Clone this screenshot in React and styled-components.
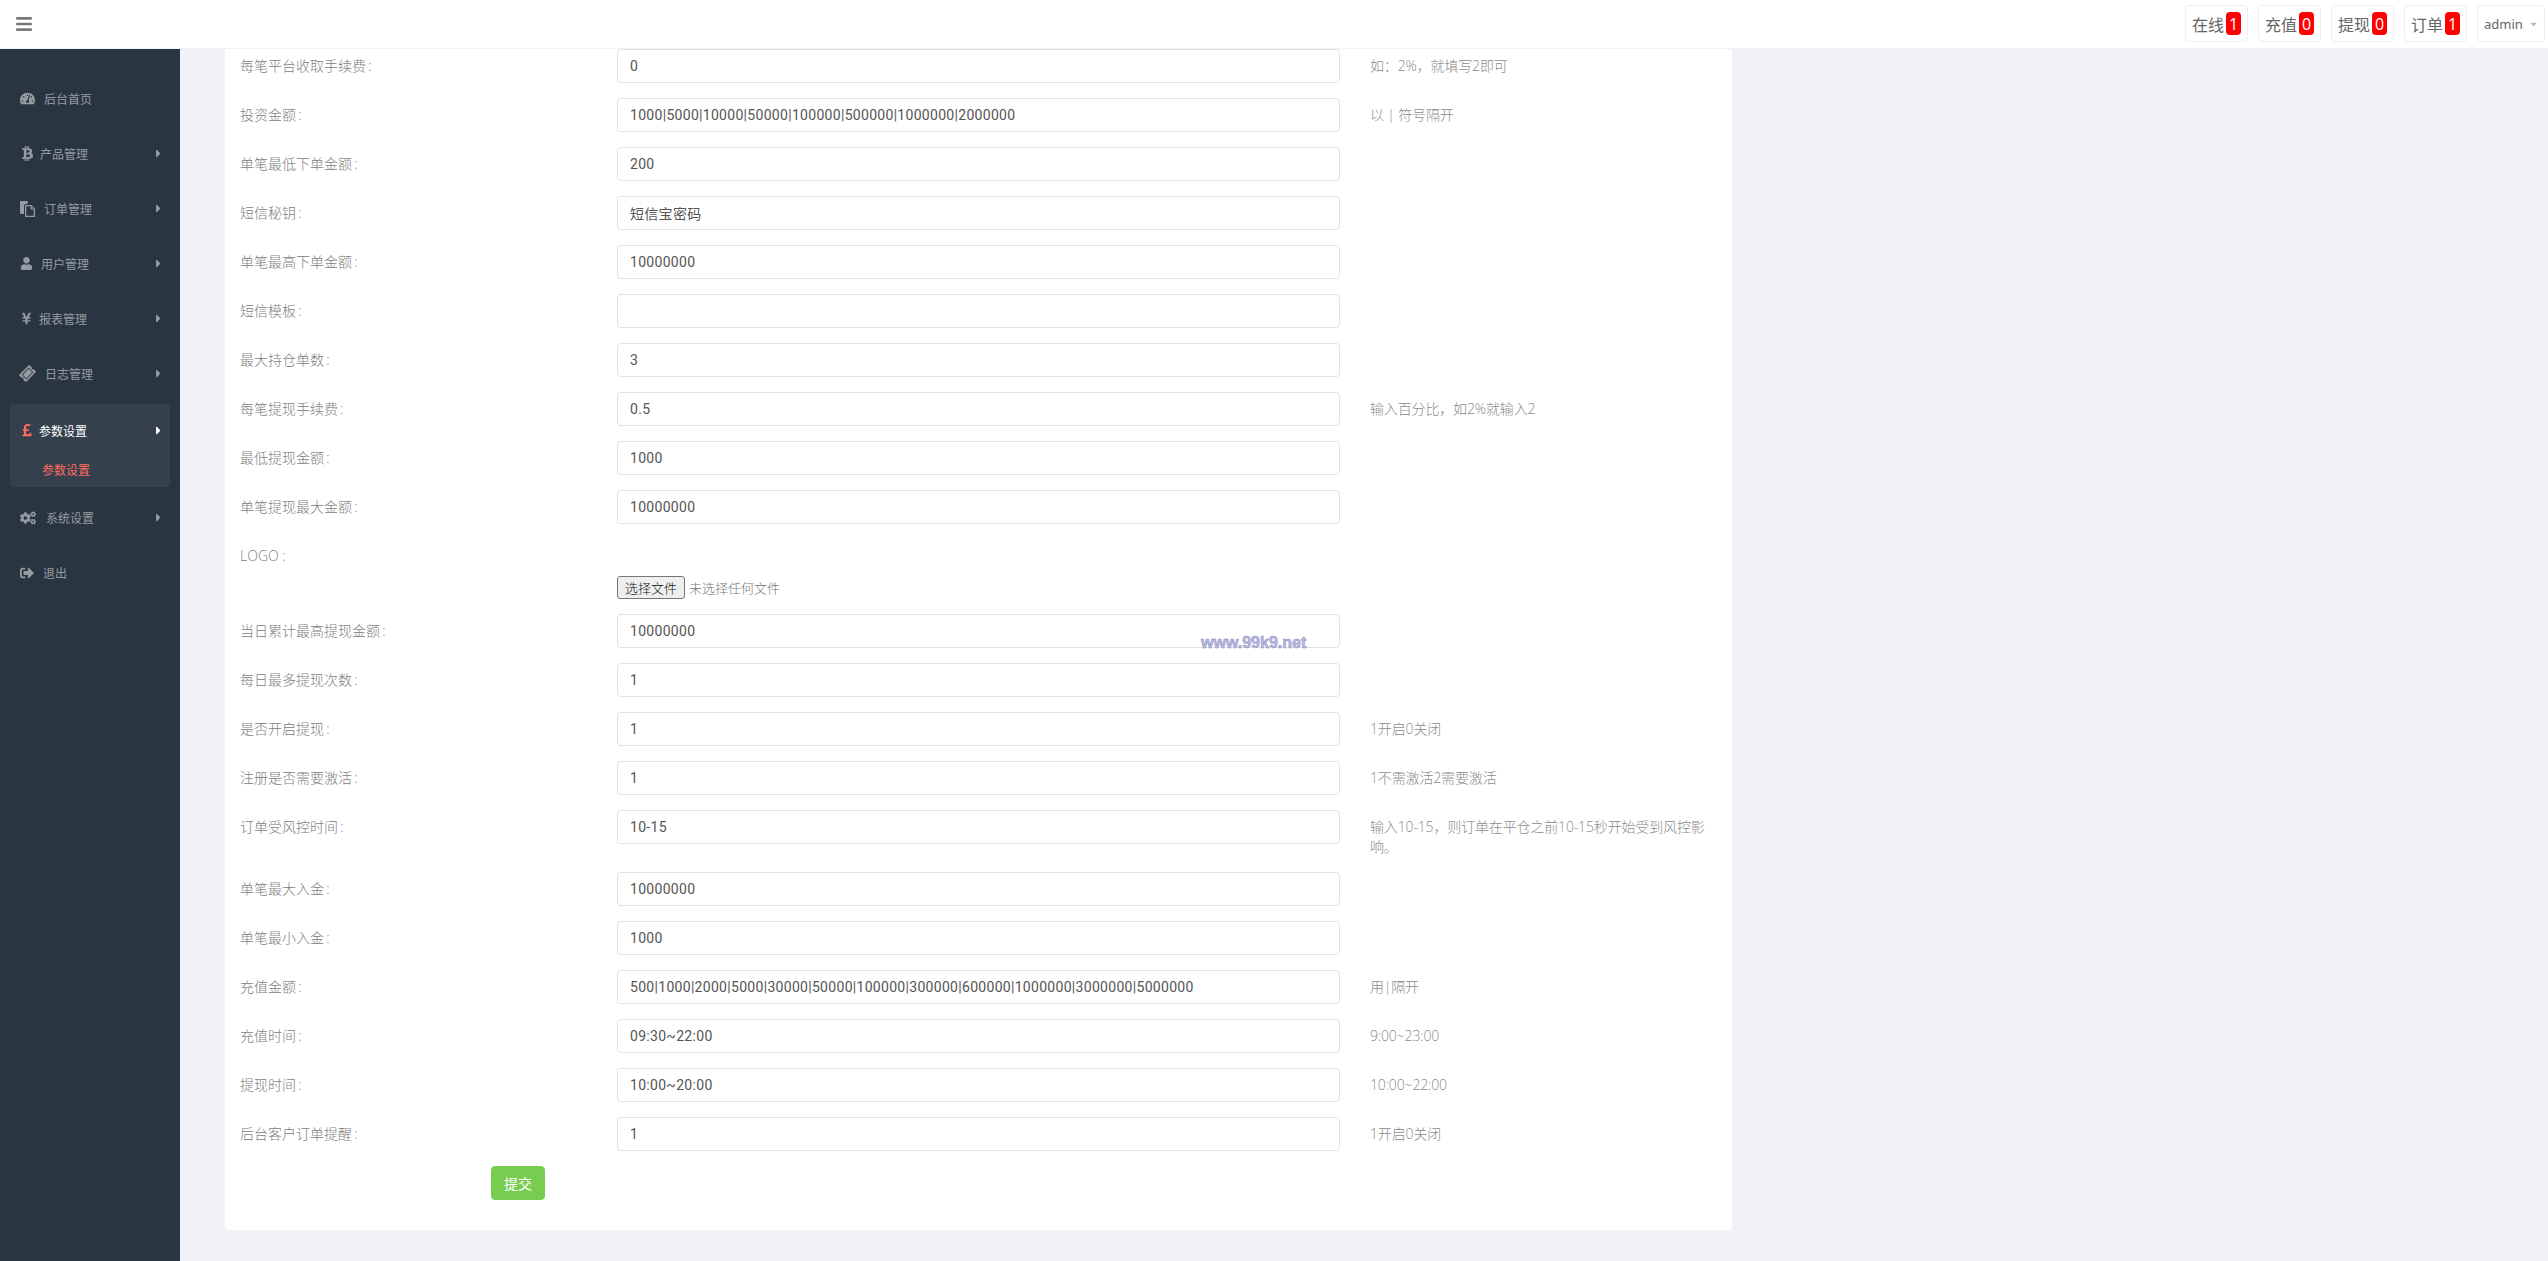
import React from "react";
import styled, { createGlobalStyle } from "styled-components";
import { FaBars, FaTachometerAlt, FaBtc, FaUser, FaYenSign, FaTicketAlt, FaPoundSign, FaCogs, FaSignOutAlt, FaCaretRight, FaCaretDown } from "react-icons/fa";

const Global = createGlobalStyle`
  html, body { margin: 0; height: 100%; overflow: hidden; background: #f1f2f7; }
  * { box-sizing: border-box; }
  body { font-family: "Open Sans", "Noto Sans CJK SC", sans-serif; font-size: 14px; color: #797979; }
`;

const Page = styled.div`
  width: 2548px;
  height: 1261px;
  display: flex;
  flex-direction: column;
  position: relative;
  overflow: hidden;
`;
const TopBar = styled.header`
  height: 48px;
  flex: none;
  background: #fff;
  box-shadow: 0 1px 0 #f1f2f7;
  position: relative;
  z-index: 1;
  display: flex;
  align-items: center;
  justify-content: space-between;
  padding: 0 3px 0 15px;
`;
const Burger = styled.span`
  display: flex;
  color: #797979;
  font-size: 18px;
`;
const TopActions = styled.div`
  display: flex;
  gap: 10px;
  align-items: center;
  margin-top: -1px;
`;
const Pill = styled.div`
  height: 37px;
  display: flex;
  align-items: center;
  gap: 2px;
  padding: 0 6px;
  border: 1px solid #eeeeee;
  border-radius: 4px;
  font: 16px "Noto Sans CJK SC", sans-serif;
  color: #666;
`;
const Badge = styled.span`
  width: 15px;
  height: 23px;
  background: #ff0000;
  border-radius: 4px;
  color: #fff;
  display: flex;
  align-items: center;
  justify-content: center;
  font: 16px "Open Sans", sans-serif;
`;
const AdminPill = styled(Pill)`
  width: 68px;
  padding: 0 6px;
  gap: 6px;
  font: 13px "Noto Sans", sans-serif;
  color: #666;
  svg { color: #bbb; font-size: 10px; }
`;
const Body = styled.div`
  flex: 1;
  display: flex;
  min-height: 0;
`;
const Side = styled.nav`
  width: 180px;
  flex: none;
  background: #2a3542;
  padding: 23px 10px 0;
`;
const NavGroup = styled.div`
  border-radius: 4px;
  background: ${p => (p.$active ? "#35404d" : "transparent")};
  margin: ${p => (p.$active ? "3px 0" : "0")};
  padding-bottom: ${p => (p.$active ? "7px" : "0")};
`;
const NavItem = styled.div`
  height: ${p => (p.$active ? "52px" : "55px")};
  display: flex;
  align-items: center;
  padding-left: 10px;
  padding-right: 5px;
  font: 12px "Noto Sans CJK SC", sans-serif;
  color: ${p => (p.$active ? "#fff" : "#aeb2b7")};
  opacity: ${p => (p.$active ? 1 : 0.82)};
`;
const NavIcon = styled.span`
  width: ${p => p.$w}px;
  flex: none;
  display: flex;
  align-items: center;
  font-size: 14px;
  margin-right: 5px;
  color: ${p => (p.$active ? "#ff6c60" : "#aeb2b7")};
  svg.tilt { transform: rotate(-45deg); }
`;
const NavText = styled.span`
  flex: 1;
`;
const Caret = styled.span`
  display: flex;
  font-size: 13px;
`;
const SubItem = styled.div`
  font: 12px "Noto Sans CJK SC", sans-serif;
  color: #ff6c60;
  padding-left: 32px;
  height: 20px;
  line-height: 20px;
  margin-top: 4px;
`;
const Main = styled.main`
  flex: 1;
  padding: 0 0 0 45px;
`;
const Card = styled.section`
  width: 1507px;
  height: 1182px;
  background: #fff;
  border-radius: 0 0 4px 4px;
  padding: 1px 15px 0;
  font-weight: 300;
`;
const Row = styled.div`
  display: grid;
  grid-template-columns: 377px 738px 362px;
  margin-bottom: 15px;
`;
const Label = styled.label`
  padding: 7px 15px 0 0;
  font: 300 14px/20px "Open Sans", "Noto Sans CJK SC", sans-serif;
  color: #808080;
`;
const Field = styled.div`
  padding: 0 15px 0 0;
`;
const TextInput = styled.input`
  display: block;
  width: 100%;
  height: 34px;
  padding: 6px 12px;
  border: 1px solid #e2e2e4;
  border-radius: 4px;
  font: 14px "Roboto", "Noto Sans CJK SC", sans-serif;
  letter-spacing: 0.3px;
  color: #555;
  outline: none;
`;
const Hint = styled.div`
  padding: 7px 0 0 15px;
  font: 300 14px/20px "Open Sans", "Noto Sans CJK SC", sans-serif;
  letter-spacing: -0.15px;
  color: #8b8b8b;
`;
const FileField = styled.div`
  padding-top: 37px;
  height: 60px;
  display: flex;
  align-items: center;
  gap: 4px;
  font: 300 13px "Noto Sans CJK SC", sans-serif;
  color: #777;
`;
const FileButton = styled.button`
  height: 23px;
  width: 68px;
  padding: 0;
  border: 1px solid #767676;
  border-radius: 3px;
  background: #efefef;
  color: #111;
  font: 300 13px "Noto Sans CJK SC", sans-serif;
`;
const Submit = styled.button`
  display: block;
  margin-left: 251px;
  width: 54px;
  height: 34px;
  border: 1px solid #78cd51;
  border-radius: 4px;
  background: #78cd51;
  color: #fff;
  font: 14px "Noto Sans CJK SC", sans-serif;
  padding: 0;
`;
const Watermark = styled.div`
  position: absolute;
  left: 1201px;
  top: 632px;
  font: bold 16px/22px "Liberation Sans", sans-serif;
  color: #b9b9e8;
  -webkit-text-stroke: 0.5px #8d8db8;
`;

const FilesIcon = () => (
  <svg width="15" height="16" viewBox="0 0 15 16" fill="currentColor">
    <path d="M0 1.2C0 .5.5 0 1.2 0h6.5v3H6C4.900 3 4 3.900 4 5v8H1.200C.5 13 0 12.500 0 11.800z" />
    <path fillRule="evenodd" d="M6 4h5.500L15 7.500V16H5V5c0-.6.4-1 1-1zm.3 1.200v9.600h7.400V8.500H10.500V5.200zm5.400.3v2h2z" />
  </svg>
);

const navs = [
  { label: "后台首页", w: 19, icon: <FaTachometerAlt size={15} /> },
  { label: "产品管理", w: 15, icon: <FaBtc size={15} />, arrow: true },
  { label: "订单管理", w: 19, icon: <FilesIcon />, arrow: true },
  { label: "用户管理", w: 16, icon: <FaUser size={13} />, arrow: true },
  { label: "报表管理", w: 14, icon: <FaYenSign size={13} />, arrow: true },
  { label: "日志管理", w: 20, icon: <FaTicketAlt size={15} className="tilt" />, arrow: true },
  { label: "参数设置", w: 14, icon: <FaPoundSign size={14} />, arrow: true, active: true, sub: "参数设置" },
  { label: "系统设置", w: 21, icon: <FaCogs size={16} />, arrow: true },
  { label: "退出", w: 18, icon: <FaSignOutAlt size={14} /> },
];

const rowsA = [
  ["每笔平台收取手续费\u2009:", "0", "如：2%，就填写2即可"],
  ["投资金额\u2009:", "1000|5000|10000|50000|100000|500000|1000000|2000000", "以 | 符号隔开"],
  ["单笔最低下单金额\u2009:", "200"],
  ["短信秘钥\u2009:", "短信宝密码"],
  ["单笔最高下单金额\u2009:", "10000000"],
  ["短信模板\u2009:", ""],
  ["最大持仓单数\u2009:", "3"],
  ["每笔提现手续费\u2009:", "0.5", "输入百分比，如2%就输入2"],
  ["最低提现金额\u2009:", "1000"],
  ["单笔提现最大金额\u2009:", "10000000"],
];
const rowsB = [
  ["当日累计最高提现金额\u2009:", "10000000"],
  ["每日最多提现次数\u2009:", "1"],
  ["是否开启提现\u2009:", "1", "1开启0关闭"],
  ["注册是否需要激活\u2009:", "1", "1不需激活2需要激活"],
  ["订单受风控时间\u2009:", "10-15", "输入10-15，则订单在平仓之前10-15秒开始受到风控影响。"],
  ["单笔最大入金\u2009:", "10000000"],
  ["单笔最小入金\u2009:", "1000"],
  ["充值金额\u2009:", "500|1000|2000|5000|30000|50000|100000|300000|600000|1000000|3000000|5000000", "用|隔开"],
  ["充值时间\u2009:", "09:30~22:00", "9:00~23:00"],
  ["提现时间\u2009:", "10:00~20:00", "10:00~22:00"],
  ["后台客户订单提醒\u2009:", "1", "1开启0关闭"],
];

const FormRow = ({ label, value, hint }) => (
  <Row>
    <Label>{label}</Label>
    <Field><TextInput defaultValue={value} /></Field>
    {hint ? <Hint>{hint}</Hint> : <span />}
  </Row>
);

export default function App() {
  return (
    <Page>
      <Global />
      <TopBar>
        <Burger><FaBars /></Burger>
        <TopActions>
          <Pill>在线<Badge>1</Badge></Pill>
          <Pill>充值<Badge>0</Badge></Pill>
          <Pill>提现<Badge>0</Badge></Pill>
          <Pill>订单<Badge>1</Badge></Pill>
          <AdminPill>admin<FaCaretDown /></AdminPill>
        </TopActions>
      </TopBar>
      <Body>
        <Side>
          {navs.map(n => (
            <NavGroup key={n.label} $active={n.active}>
              <NavItem $active={n.active}>
                <NavIcon $w={n.w} $active={n.active}>{n.icon}</NavIcon>
                <NavText>{n.label}</NavText>
                {n.arrow && <Caret><FaCaretRight /></Caret>}
              </NavItem>
              {n.sub && <SubItem>{n.sub}</SubItem>}
            </NavGroup>
          ))}
        </Side>
        <Main>
          <Card>
            {rowsA.map(r => <FormRow key={r[0]} label={r[0]} value={r[1]} hint={r[2]} />)}
            <Row>
              <Label>LOGO :</Label>
              <Field>
                <FileField><FileButton>选择文件</FileButton>未选择任何文件</FileField>
              </Field>
              <span />
            </Row>
            {rowsB.map(r => <FormRow key={r[0]} label={r[0]} value={r[1]} hint={r[2]} />)}
            <Submit>提交</Submit>
          </Card>
        </Main>
      </Body>
      <Watermark>www.99k9.net</Watermark>
    </Page>
  );
}
